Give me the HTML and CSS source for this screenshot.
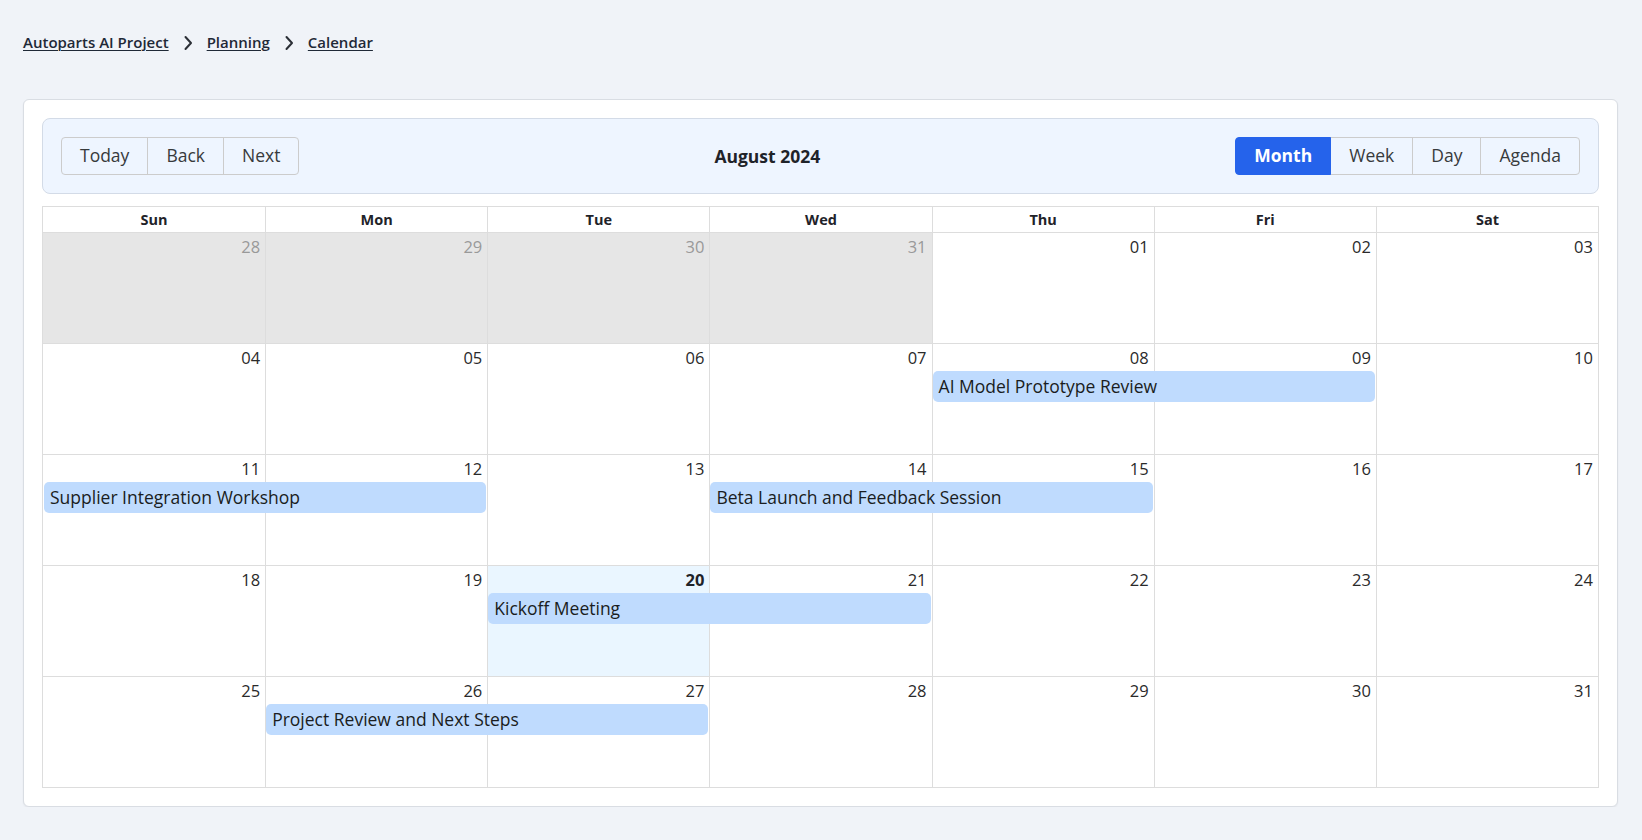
FILE: index.html
```html
<!DOCTYPE html>
<html lang="en">
<head>
<meta charset="utf-8">
<title>Calendar</title>
<link rel="stylesheet" href="styles.css">
</head>
<body>
<div class="page">
  <nav class="crumbs">
    <a href="#" class="crumb">Autoparts AI Project</a>
    <svg class="chev" viewBox="0 0 10 16" width="10" height="16"><path d="M2.5 2 L8 8 L2.5 14" fill="none" stroke="#2b2f36" stroke-width="2" stroke-linecap="round" stroke-linejoin="round"/></svg>
    <a href="#" class="crumb">Planning</a>
    <svg class="chev" viewBox="0 0 10 16" width="10" height="16"><path d="M2.5 2 L8 8 L2.5 14" fill="none" stroke="#2b2f36" stroke-width="2" stroke-linecap="round" stroke-linejoin="round"/></svg>
    <a href="#" class="crumb">Calendar</a>
  </nav>

  <section class="card">
    <div class="toolbar">
      <div class="btn-group">
        <button class="btn">Today</button>
        <button class="btn">Back</button>
        <button class="btn">Next</button>
      </div>
      <div class="title">August 2024</div>
      <div class="btn-group">
        <button class="btn active">Month</button>
        <button class="btn">Week</button>
        <button class="btn">Day</button>
        <button class="btn">Agenda</button>
      </div>
    </div>

    <div class="month">
      <div class="head">
        <div class="hcell">Sun</div><div class="hcell">Mon</div><div class="hcell">Tue</div><div class="hcell">Wed</div><div class="hcell">Thu</div><div class="hcell">Fri</div><div class="hcell">Sat</div>
      </div>

      <div class="week">
        <div class="bg off c1"></div><div class="bg off c2"></div><div class="bg off c3"></div><div class="bg off c4"></div><div class="bg c5"></div><div class="bg c6"></div><div class="bg c7"></div>
        <div class="date off-txt c1">28</div><div class="date off-txt c2">29</div><div class="date off-txt c3">30</div><div class="date off-txt c4">31</div><div class="date c5">01</div><div class="date c6">02</div><div class="date c7">03</div>
      </div>

      <div class="week">
        <div class="bg c1"></div><div class="bg c2"></div><div class="bg c3"></div><div class="bg c4"></div><div class="bg c5"></div><div class="bg c6"></div><div class="bg c7"></div>
        <div class="date c1">04</div><div class="date c2">05</div><div class="date c3">06</div><div class="date c4">07</div><div class="date c5">08</div><div class="date c6">09</div><div class="date c7">10</div>
        <div class="event s5 span2">AI Model Prototype Review</div>
      </div>

      <div class="week">
        <div class="bg c1"></div><div class="bg c2"></div><div class="bg c3"></div><div class="bg c4"></div><div class="bg c5"></div><div class="bg c6"></div><div class="bg c7"></div>
        <div class="date c1">11</div><div class="date c2">12</div><div class="date c3">13</div><div class="date c4">14</div><div class="date c5">15</div><div class="date c6">16</div><div class="date c7">17</div>
        <div class="event s1 span2">Supplier Integration Workshop</div>
        <div class="event s4 span2">Beta Launch and Feedback Session</div>
      </div>

      <div class="week">
        <div class="bg c1"></div><div class="bg c2"></div><div class="bg today c3"></div><div class="bg c4"></div><div class="bg c5"></div><div class="bg c6"></div><div class="bg c7"></div>
        <div class="date c1">18</div><div class="date c2">19</div><div class="date now c3">20</div><div class="date c4">21</div><div class="date c5">22</div><div class="date c6">23</div><div class="date c7">24</div>
        <div class="event s3 span2">Kickoff Meeting</div>
      </div>

      <div class="week">
        <div class="bg c1"></div><div class="bg c2"></div><div class="bg c3"></div><div class="bg c4"></div><div class="bg c5"></div><div class="bg c6"></div><div class="bg c7"></div>
        <div class="date c1">25</div><div class="date c2">26</div><div class="date c3">27</div><div class="date c4">28</div><div class="date c5">29</div><div class="date c6">30</div><div class="date c7">31</div>
        <div class="event s2 span2">Project Review and Next Steps</div>
      </div>
    </div>
  </section>
</div>
</body>
</html>
```

FILE: styles.css
```css
* { box-sizing: border-box; }

html, body {
  margin: 0;
  padding: 0;
  background: #f0f3f8;
}

body {
  font-family: "Open Sans", "Noto Sans", "Liberation Sans", sans-serif;
  color: #1f2329;
}

.page {
  padding: 30px 24px 0 23px;
}

.crumbs {
  display: flex;
  align-items: center;
  gap: 14px;
  height: 24px;
  margin-bottom: 45px;
}

.crumb {
  font-size: 15px;
  font-weight: 600;
  color: #1f2937;
  text-decoration: underline;
  text-underline-offset: 2px;
  text-decoration-thickness: 1px;
}

.chev {
  display: block;
  margin-top: 1px;
}

.card {
  background: #ffffff;
  border: 1px solid #d9dde3;
  border-radius: 6px;
  box-shadow: 0 1px 2px rgba(0, 0, 0, 0.06);
  padding: 18px;
  display: flex;
  flex-direction: column;
  gap: 12px;
}

.toolbar {
  display: flex;
  align-items: center;
  background: #eef5ff;
  border: 1px solid #d3dbe7;
  border-radius: 8px;
  padding: 18px;
}

.title {
  flex: 1;
  text-align: center;
  font-size: 17.5px;
  font-weight: 700;
  color: #1f2329;
}

.btn-group {
  display: flex;
}

.btn {
  font-family: inherit;
  font-size: 17.5px;
  color: #373a3c;
  background: transparent;
  border: 1px solid #cccccc;
  height: 38px;
  padding: 0 18px;
  margin: 0;
  margin-left: -1px;
  line-height: 1;
  cursor: pointer;
}

.btn:first-child {
  margin-left: 0;
  border-radius: 4px 0 0 4px;
}

.btn:last-child {
  border-radius: 0 4px 4px 0;
}

.btn.active {
  background: #2563eb;
  border-color: #2563eb;
  color: #ffffff;
  font-weight: 700;
  position: relative;
}

.month {
  border: 1px solid #dddddd;
  display: flex;
  flex-direction: column;
}

.head {
  display: grid;
  grid-template-columns: repeat(7, 1fr);
  height: 26px;
  border-bottom: 1px solid #dddddd;
}

.hcell {
  text-align: center;
  font-size: 14.5px;
  font-weight: 700;
  line-height: 25px;
  color: #1f2329;
  border-left: 1px solid #dddddd;
}

.hcell:first-child {
  border-left: none;
}

.week {
  display: grid;
  grid-template-columns: repeat(7, 1fr);
  grid-template-rows: 27px 31px 1fr;
  height: 111px;
  border-top: 1px solid #dddddd;
}

.week:nth-child(2) {
  height: 110px;
  border-top: none;
}

.bg {
  grid-row: 1 / 4;
  border-left: 1px solid #dddddd;
}

.bg.c1 {
  border-left: none;
}

.bg.off {
  background: #e6e6e6;
}

.bg.today {
  background: #eaf6ff;
}

.c1 { grid-column: 1; }
.c2 { grid-column: 2; }
.c3 { grid-column: 3; }
.c4 { grid-column: 4; }
.c5 { grid-column: 5; }
.c6 { grid-column: 6; }
.c7 { grid-column: 7; }

.date {
  grid-row: 1;
  text-align: right;
  padding: 3px 5px 0 0;
  font-size: 16.5px;
  line-height: 22px;
  color: #2a2a2a;
}

.date.off-txt {
  color: #999999;
}

.date.now {
  font-weight: 700;
  color: #1f2329;
}

.event {
  grid-row: 2;
  margin: 0 1px 0 1px;
  background: #bfdbfe;
  border-radius: 5px;
  padding: 0 6px;
  font-size: 17.5px;
  line-height: 31px;
  color: #1a1d21;
  white-space: nowrap;
  overflow: hidden;
}

.s1 { grid-column-start: 1; }
.s2 { grid-column-start: 2; }
.s3 { grid-column-start: 3; }
.s4 { grid-column-start: 4; }
.s5 { grid-column-start: 5; }

.span2 { grid-column-end: span 2; }
```
